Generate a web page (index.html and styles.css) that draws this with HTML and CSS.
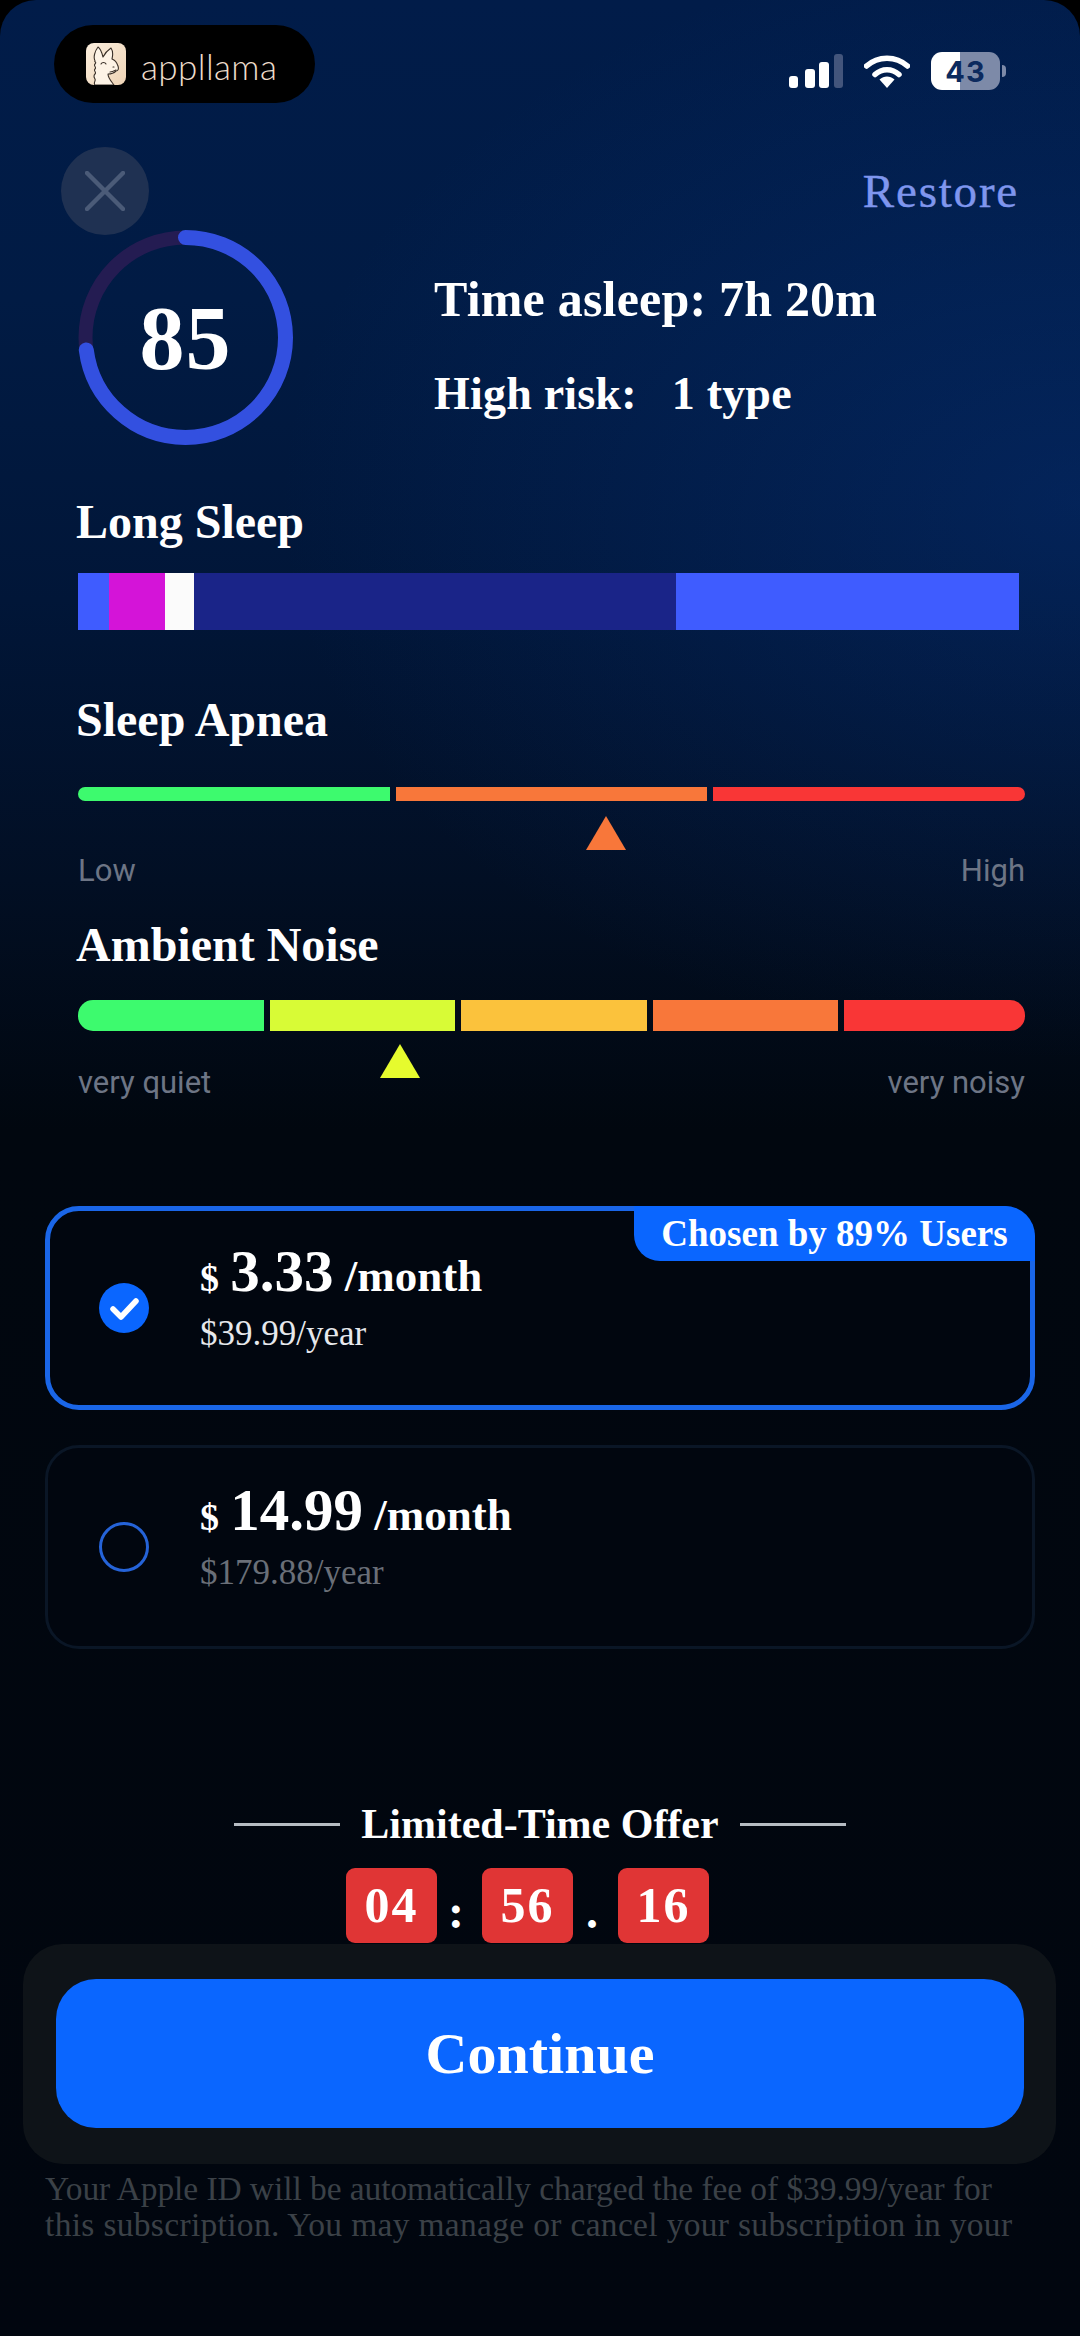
FILE: index.html
```html
<!DOCTYPE html>
<html lang="en">
<head>
<meta charset="utf-8">
<title>Sleep report offer</title>
<link rel="stylesheet" href="styles.css">
</head>
<body>
<main class="screen">
  <div class="status">
    <div class="brand">
      <svg class="brand-icon" viewBox="0 0 40 42">
        <defs><linearGradient id="cream" x1="0" y1="0" x2="1" y2="1"><stop offset="0" stop-color="#fbeedd"/><stop offset="1" stop-color="#eed4b6"/></linearGradient></defs>
        <rect width="40" height="42" rx="8" fill="url(#cream)"/>
        <path d="M9 42c-2-2 1-4 0-6s-2-3 0-5-2-3 0-5-2-3 0-5-1-2 0-3C7 14 9 8 12 4c3 2 4 6 5 10 2-4 5-7 8-9 2 3 2 7 1 11 3 1 5 4 6 7 1 3 0 5-2 5-2 2-5 3-8 3 0 4 3 7 6 11z" fill="#fdf3e6" stroke="#3a3028" stroke-width="1.100" stroke-linejoin="round"/>
        <path d="M15 21c1-2 4-2 5 0M27 24h1M24 29c2 0 4-1 6-2" fill="none" stroke="#3a3028" stroke-width="1.100" stroke-linecap="round"/>
      </svg>
      <span class="brand-name">appllama</span>
    </div>
    <div class="indicators">
      <svg class="signal" viewBox="0 0 54 34">
        <rect x="0" y="22" width="9" height="12" rx="3" fill="#fff"/>
        <rect x="16" y="15" width="10" height="19" rx="3" fill="#fff"/>
        <rect x="30" y="8" width="10" height="26" rx="3" fill="#fff"/>
        <rect x="45" y="0" width="9" height="34" rx="3" fill="#43557c"/>
      </svg>
      <svg class="wifi" viewBox="0 0 46 34">
        <path d="M2.5 12C14 1.500 32 1.500 43.500 12" fill="none" stroke="#fff" stroke-width="5.500" stroke-linecap="round"/>
        <path d="M11 20.500c7-6.500 17-6.500 24 0" fill="none" stroke="#fff" stroke-width="5.500" stroke-linecap="round"/>
        <path d="M15.500 25.500c4.500-4 10.500-4 15 0L23 34z" fill="#fff"/>
      </svg>
      <div class="battery">
        <span class="battery-level">43</span>
      </div>
      <span class="battery-nub"></span>
    </div>
  </div>

  <div class="toolbar">
    <button class="close" type="button" aria-label="Close">
      <svg viewBox="0 0 40 40"><path d="M2 2l36 36M38 2L2 38" fill="none" stroke="#4b5b78" stroke-width="4.500" stroke-linecap="round"/></svg>
    </button>
    <span class="restore">Restore</span>
  </div>

  <section class="hero">
    <div class="ring">
      <svg viewBox="0 0 215 215">
        <circle class="ring-track" cx="107.500" cy="107.500" r="100"/>
        <circle class="ring-value" cx="107.500" cy="107.500" r="100" pathLength="100" stroke-dasharray="73 100" transform="rotate(-90 107.500 107.500)"/>
      </svg>
      <span class="ring-score">85</span>
    </div>
    <div class="hero-stats">
      <p class="stat">Time asleep: 7h 20m</p>
      <p class="stat stat-risk">High risk: &nbsp; 1 type</p>
    </div>
  </section>

  <section class="metric metric-long">
    <h2 class="metric-title">Long Sleep</h2>
    <div class="stack">
      <span class="stack-seg seg-a"></span>
      <span class="stack-seg seg-b"></span>
      <span class="stack-seg seg-c"></span>
      <span class="stack-seg seg-d"></span>
      <span class="stack-seg seg-e"></span>
    </div>
  </section>

  <section class="metric metric-apnea">
    <h2 class="metric-title">Sleep Apnea</h2>
    <div class="scale scale-thin">
      <span class="green"></span><span class="orange"></span><span class="red"></span>
    </div>
    <div class="pointer-row">
      <span class="pointer pointer-orange"></span>
    </div>
    <div class="scale-labels"><span>Low</span><span>High</span></div>
  </section>

  <section class="metric metric-noise">
    <h2 class="metric-title">Ambient Noise</h2>
    <div class="scale scale-thick">
      <span class="green"></span><span class="lime"></span><span class="amber"></span><span class="orange"></span><span class="red"></span>
    </div>
    <div class="noise-foot">
      <span class="pointer pointer-lime"></span>
      <div class="scale-labels"><span>very quiet</span><span>very noisy</span></div>
    </div>
  </section>

  <section class="plans">
    <div class="plan plan-active">
      <span class="plan-badge">Chosen by 89% Users</span>
      <span class="radio radio-on">
        <svg viewBox="0 0 50 50"><path d="M14 26l8 8 15-16" fill="none" stroke="#fff" stroke-width="5.500" stroke-linecap="round" stroke-linejoin="round"/></svg>
      </span>
      <div class="plan-text">
        <p class="plan-price"><span class="cur">$</span> <span class="amount">3.33</span> /month</p>
        <p class="plan-year">$39.99/year</p>
      </div>
    </div>
    <div class="plan">
      <span class="radio"></span>
      <div class="plan-text">
        <p class="plan-price"><span class="cur">$</span> <span class="amount">14.99</span> /month</p>
        <p class="plan-year plan-year-dim">$179.88/year</p>
      </div>
    </div>
  </section>

  <section class="offer">
    <div class="offer-title"><span class="rule"></span><span>Limited-Time Offer</span><span class="rule"></span></div>
    <div class="timer">
      <span class="digit">04</span><span class="sep">:</span><span class="digit">56</span><span class="sep">.</span><span class="digit">16</span>
    </div>
  </section>

  <section class="cta-panel">
    <button class="cta" type="button">Continue</button>
  </section>

  <p class="legal"><span class="legal-line legal-first">Your Apple ID will be automatically charged the fee of $39.99/year for</span><span class="legal-line legal-second">this subscription. You may manage or cancel your subscription in your</span></p>
</main>
</body>
</html>
```

FILE: styles.css
```css
* { box-sizing: border-box; }
html, body { margin: 0; padding: 0; background: #000; }
p, h2 { margin: 0; }
button { border: 0; padding: 0; font: inherit; }

.screen {
  width: 1080px;
  height: 2336px;
  overflow: hidden;
  border-radius: 36px 36px 0 0;
  display: flex;
  flex-direction: column;
  font-family: "Liberation Serif", serif;
  color: #fff;
  background:
    radial-gradient(800px 560px at 1080px 500px, rgba(8, 60, 150, .32), rgba(8, 60, 150, 0) 100%),
    linear-gradient(180deg, #011c49 0, #011b44 300px, #011638 600px, #020f24 880px, #01070f 1130px, #01060f 100%);
}

/* status */
.status {
  height: 78px;
  margin-top: 25px;
  padding: 0 74px 0 54px;
  display: flex;
  justify-content: space-between;
  flex: none;
}
.brand {
  width: 261px;
  height: 78px;
  border-radius: 39px;
  background: #000;
  display: flex;
  align-items: center;
  padding-left: 32px;
  gap: 15px;
}
.brand-icon { width: 40px; height: 42px; }
.brand-name {
  font-family: Lato, sans-serif;
  font-weight: 300;
  font-size: 35px;
  letter-spacing: .4px;
  color: #ecdccb;
  position: relative;
  top: 2px;
}
.indicators { display: flex; align-items: flex-start; padding-top: 27px; }
.signal { width: 54px; height: 34px; margin: 2px 21px 0 0; }
.wifi { width: 46px; height: 34px; margin: 2px 21px 0 0; }
.battery {
  width: 69px;
  height: 38px;
  border-radius: 11px;
  background: linear-gradient(90deg, #fff 0, #fff 29px, #7d8aa8 29px, #7d8aa8 100%);
  display: flex;
  align-items: center;
  justify-content: center;
}
.battery-level {
  font-family: Inter, sans-serif;
  font-weight: 700;
  font-size: 29px;
  letter-spacing: 1px;
  color: #0c2a5e;
}
.battery-nub {
  width: 4px;
  height: 12px;
  margin: 13px 0 0 2px;
  border-radius: 0 6px 6px 0;
  background: #7d8aa8;
}

/* toolbar */
.toolbar {
  height: 88px;
  margin-top: 44px;
  padding: 0 61px;
  display: flex;
  justify-content: space-between;
  align-items: center;
  flex: none;
}
.close {
  width: 88px;
  height: 88px;
  border-radius: 50%;
  background: #1f3152;
  display: flex;
  align-items: center;
  justify-content: center;
}
.close svg { width: 40px; height: 40px; }
.restore { font-size: 47px; color: #7f96ee; letter-spacing: 1.800px; -webkit-text-stroke: .4px #7f96ee; }

/* hero */
.hero {
  height: 215px;
  margin-top: -5px;
  padding-left: 78px;
  display: flex;
  flex: none;
}
.ring { position: relative; width: 215px; height: 215px; flex: none; }
.ring svg { width: 215px; height: 215px; display: block; }
.ring-track { fill: none; stroke: #241c52; stroke-width: 14; }
.ring-value { fill: none; stroke: #3350e0; stroke-width: 15; stroke-linecap: round; }
.ring-score {
  position: absolute;
  inset: 2px 0 0;
  display: flex;
  align-items: center;
  justify-content: center;
  font-weight: 700;
  font-size: 90px;
  letter-spacing: 1px;
}
.hero-stats { margin-left: 141px; padding-top: 44px; }
.stat { font-weight: 700; font-size: 50px; line-height: 50px; letter-spacing: .2px; white-space: nowrap; }
.stat-risk { margin-top: 45px; font-size: 46px; }

/* metrics */
.metric { padding: 0 55px 0 78px; flex: none; }
.metric-title { font-weight: 700; font-size: 48px; line-height: 50px; margin-left: -2px; }
.metric-long { margin-top: 52px; }
.metric-apnea { margin-top: 65px; }
.metric-noise { margin-top: 31px; }

.stack { display: flex; height: 57px; width: 941px; margin-top: 26px; }
.stack-seg { display: block; }
.seg-a { width: 31px; background: #3f5cff; }
.seg-b { width: 56px; background: #d414d8; }
.seg-c { width: 29px; background: #fbfbfb; }
.seg-d { width: 482px; background: #1a2488; }
.seg-e { width: 343px; background: #3f5cff; }

.scale { display: flex; gap: 6px; overflow: hidden; }
.scale span { flex: 1; display: block; }
.scale-thin { height: 14px; border-radius: 7px; margin-top: 42px; }
.scale-thick { height: 31px; border-radius: 15px; margin-top: 30px; }
.scale-thick .red { flex: 0 0 181px; }
.green { background: #3dfa6e; }
.lime { background: #d8fb36; }
.amber { background: #fbc23c; }
.orange { background: #f8773a; }
.red { background: #f93636; }

.pointer-row { height: 34px; margin-top: 15px; padding-left: 508px; }
.pointer { display: block; width: 40px; height: 34px; clip-path: polygon(50% 0, 100% 100%, 0 100%); }
.pointer-orange { background: #f8773a; }
.pointer-lime { background: #e6fb2e; position: absolute; left: 302px; top: 13px; }
.scale-labels {
  display: flex;
  justify-content: space-between;
  font-family: Roboto, sans-serif;
  font-size: 31px;
  line-height: 36px;
  color: #6d7585;
}
.metric-apnea .scale-labels { margin-top: 3px; }
.noise-foot { position: relative; padding-top: 34px; }

/* plans */
.plans { padding: 0 45px; margin-top: 105px; display: flex; flex-direction: column; gap: 35px; flex: none; }
.plan {
  position: relative;
  height: 204px;
  border: 3px solid #0a1626;
  border-radius: 34px;
  padding-left: 51px;
  display: flex;
  align-items: center;
  background: #01060f;
}
.plan-active { border: 5px solid #1a66e8; padding-left: 49px; }
.plan-badge {
  position: absolute;
  right: -5px;
  top: -5px;
  width: 401px;
  height: 55px;
  background: #0a66ff;
  border-radius: 0 30px 0 26px;
  font-size: 37px;
  font-weight: 700;
  line-height: 56px;
  text-align: center;
  white-space: nowrap;
}
.radio {
  width: 50px;
  height: 50px;
  border-radius: 50%;
  border: 3px solid #2563d8;
  flex: none;
}
.radio-on { background: #0a66ff; border: 0; }
.radio-on svg { width: 50px; height: 50px; display: block; }
.plan-text { margin-left: 51px; margin-top: -24px; }
.plan-price { font-weight: 700; font-size: 45px; line-height: 64px; white-space: nowrap; }
.cur { font-size: 38px; }
.amount { font-size: 59px; }
.plan-year { font-size: 35px; line-height: 40px; margin-top: 4px; color: #e6e8ec; }
.plan-year-dim { color: #6a6f78; }

/* offer */
.offer { margin-top: 153px; flex: none; }
.offer-title {
  display: flex;
  justify-content: center;
  align-items: center;
  gap: 21px;
  font-size: 42px;
  font-weight: 700;
  line-height: 44px;
}
.rule { width: 106px; height: 3px; background: #b6bcc2; }
.timer { display: flex; justify-content: center; align-items: flex-start; margin-top: 22px; padding-right: 25px; }
.digit {
  width: 91px;
  height: 75px;
  border-radius: 9px;
  background: #e03535;
  font-size: 50px;
  font-weight: 700;
  letter-spacing: 2px;
  line-height: 74px;
  text-align: center;
}
.sep { width: 45px; height: 75px; padding-right: 7px; text-align: center; font-size: 48px; font-weight: 700; line-height: 88px; }

/* cta */
.cta-panel {
  width: 1033px;
  height: 220px;
  margin: 1px 0 0 23px;
  padding: 35px 32px 0 33px;
  border-radius: 40px;
  background: #0e1318;
  flex: none;
}
.cta {
  display: block;
  width: 968px;
  height: 149px;
  border-radius: 40px;
  background: #0a66ff;
  color: #fff;
  font-family: "Liberation Serif", serif;
  font-weight: 700;
  font-size: 58px;
}
.legal {
  margin: 7px 0 0 45px;
  font-size: 33.500px;
  line-height: 36px;
  white-space: nowrap;
  color: #3b4147;
}
.legal-line { display: block; }
.legal-first { letter-spacing: -.08px; }
.legal-second { letter-spacing: .32px; }
```
